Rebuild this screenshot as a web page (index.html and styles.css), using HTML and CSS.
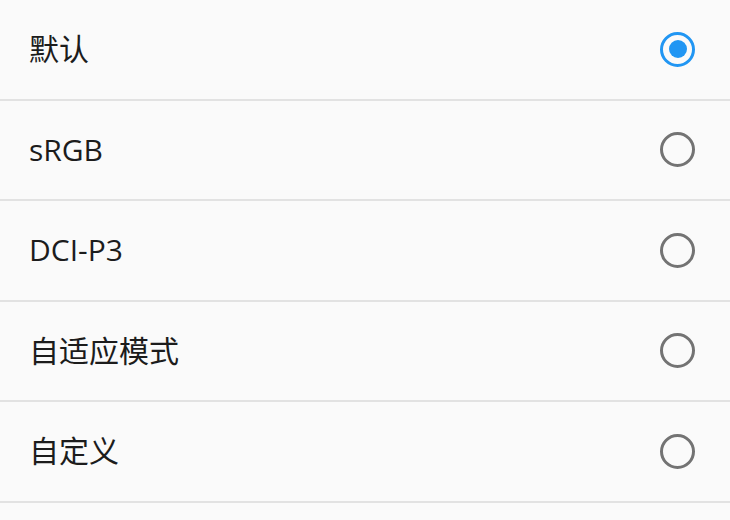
FILE: index.html
```html
<!DOCTYPE html>
<html lang="zh">
<head>
<meta charset="utf-8">
<link rel="stylesheet" href="styles.css">
</head>
<body>
<ul class="list">
  <li class="row"><span class="label">默认</span><span class="radio checked"></span></li>
  <li class="row"><span class="label">sRGB</span><span class="radio"></span></li>
  <li class="row"><span class="label">DCI-P3</span><span class="radio"></span></li>
  <li class="row"><span class="label">自适应模式</span><span class="radio"></span></li>
  <li class="row"><span class="label">自定义</span><span class="radio"></span></li>
</ul>
</body>
</html>
```
FILE: styles.css
```css
html, body {
  margin: 0;
  padding: 0;
  background: #fafafa;
}
body {
  font-family: "Open Sans", "Noto Sans CJK SC", sans-serif;
  color: #1c1c1c;
}
.list {
  list-style: none;
  margin: 0;
  padding: 0;
}
.row {
  height: 98.5px;
  border-bottom: 2px solid #e2e2e2;
  display: flex;
  align-items: center;
  justify-content: space-between;
  padding: 0 35px 0 29px;
}
.label {
  font-size: 30px;
  line-height: 1;
}
.radio {
  width: 29px;
  height: 29px;
  border: 3px solid #737373;
  border-radius: 50%;
  display: flex;
  align-items: center;
  justify-content: center;
  box-sizing: content-box;
}
.radio.checked {
  border-color: #2196f3;
}
.radio.checked::after {
  content: "";
  width: 18px;
  height: 18px;
  border-radius: 50%;
  background: #2196f3;
}
```
